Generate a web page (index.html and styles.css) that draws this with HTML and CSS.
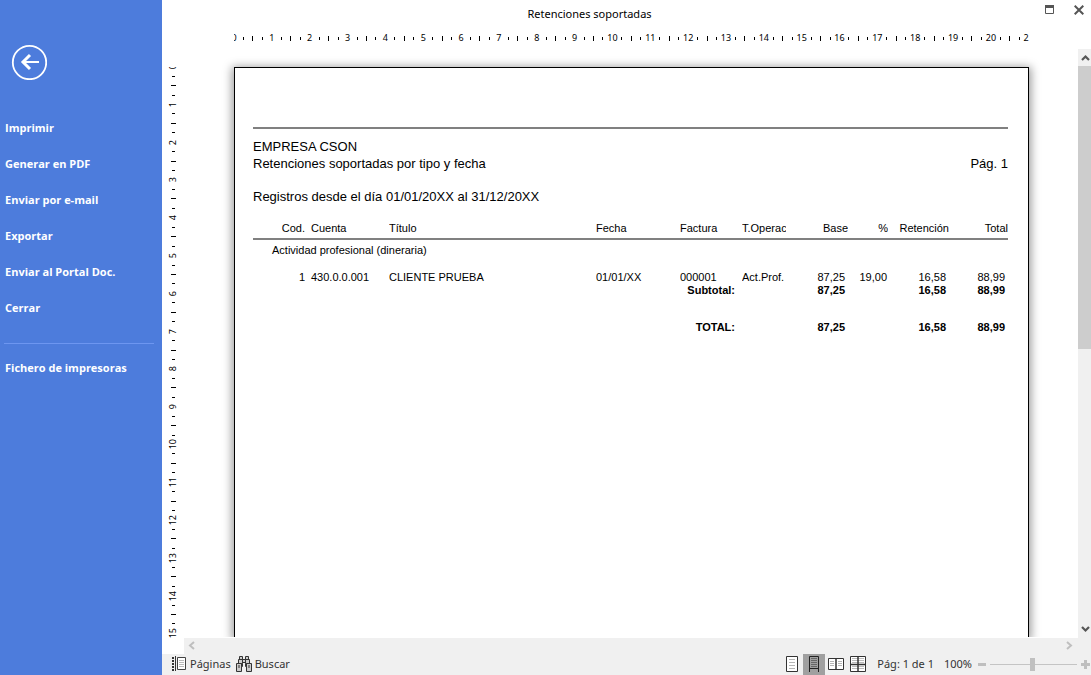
FILE: index.html
```html
<!DOCTYPE html>
<html lang="es">
<head>
<meta charset="utf-8">
<title>Retenciones soportadas</title>
<link rel="stylesheet" href="styles.css">
</head>
<body>
<div class="app">
  <nav class="sidebar" aria-label="Menú">
    <button class="back" type="button" aria-label="Volver">
      <svg width="36" height="36" viewBox="0 0 36 36" fill="none" stroke="#fff">
        <circle cx="18.500" cy="18.500" r="16.700" stroke-width="1.800"/>
        <path d="M28 18H12" stroke-width="2"/>
        <path d="M19 11L12 18L19 25" stroke-width="3"/>
      </svg>
    </button>
    <ul class="menu">
      <li><a href="#">Imprimir</a></li>
      <li><a href="#">Generar en PDF</a></li>
      <li><a href="#">Enviar por e-mail</a></li>
      <li><a href="#">Exportar</a></li>
      <li><a href="#">Enviar al Portal Doc.</a></li>
      <li><a href="#">Cerrar</a></li>
      <li class="menu-split"><a href="#">Fichero de impresoras</a></li>
    </ul>
  </nav>

  <main class="preview">
    <header class="titlebar">
      <h1>Retenciones soportadas</h1>
      <div class="window-buttons">
        <button type="button" aria-label="Maximizar">
          <svg width="9" height="10" viewBox="0 0 9 10"><path d="M.5 1V8.500H8.500V1" fill="none" stroke="#555"/><path d="M0 0H9V3H0z" fill="#555"/></svg>
        </button>
        <button type="button" aria-label="Cerrar ventana">
          <svg width="10" height="10" viewBox="0 0 10 10"><path d="M.7.7L9.300 9.300M9.300.7L.7 9.300" fill="none" stroke="#555" stroke-width="2"/></svg>
        </button>
      </div>
    </header>

    <div class="ruler-row">
      <div class="ruler-h"><ol class="scale" data-units="22"></ol></div>
    </div>

    <div class="workspace">
      <div class="ruler-v"><ol class="scale" data-units="16"></ol></div>
      <div class="viewport">
        <article class="paper">
          <header class="report-head">
            <p>EMPRESA CSON</p>
            <p class="report-title"><span>Retenciones soportadas por tipo y fecha</span><span>Pág. 1</span></p>
            <p class="report-range">Registros desde el día 01/01/20XX al 31/12/20XX</p>
          </header>
          <table class="report">
            <colgroup>
              <col class="c-cod"><col class="c-cuenta"><col><col class="c-fecha"><col class="c-factura">
              <col class="c-oper"><col class="c-base"><col class="c-pct"><col class="c-ret"><col class="c-total">
            </colgroup>
            <thead>
              <tr>
                <th class="num">Cod.</th><th class="inset">Cuenta</th><th>Título</th><th>Fecha</th><th>Factura</th>
                <th>T.Operac.</th><th class="num">Base</th><th class="num">%</th><th class="num">Retención</th><th class="num">Total</th>
              </tr>
            </thead>
            <tbody>
              <tr class="group"><td colspan="10">Actividad profesional (dineraria)</td></tr>
              <tr class="entry">
                <td class="num">1</td><td class="inset">430.0.0.001</td><td>CLIENTE PRUEBA</td><td>01/01/XX</td><td>000001</td>
                <td>Act.Prof.</td><td class="num amount">87,25</td><td class="num rate">19,00</td><td class="num amount">16,58</td><td class="num amount">88,99</td>
              </tr>
              <tr class="sum">
                <td class="num label" colspan="5">Subtotal:</td><td></td><td class="num amount">87,25</td><td></td><td class="num amount">16,58</td><td class="num amount">88,99</td>
              </tr>
            </tbody>
            <tfoot>
              <tr class="sum grand">
                <td class="num label" colspan="5">TOTAL:</td><td></td><td class="num amount">87,25</td><td></td><td class="num amount">16,58</td><td class="num amount">88,99</td>
              </tr>
            </tfoot>
          </table>
        </article>
      </div>
      <div class="vscroll">
        <button type="button" aria-label="Subir"><svg width="9" height="7" viewBox="0 0 9 7"><path d="M1 6L4.500 2.500L8 6" fill="none" stroke="#555" stroke-width="2.200"/></svg></button>
        <div class="track"><div class="thumb"></div></div>
        <button type="button" aria-label="Bajar"><svg width="9" height="7" viewBox="0 0 9 7"><path d="M1 1L4.500 4.500L8 1" fill="none" stroke="#555" stroke-width="2.200"/></svg></button>
      </div>
    </div>

    <div class="hscroll">
      <button type="button" aria-label="Izquierda"><svg width="7" height="9" viewBox="0 0 7 9"><path d="M6 1L2 4.500L6 8" fill="none" stroke="#bfbfbf" stroke-width="2"/></svg></button>
      <button type="button" aria-label="Derecha"><svg width="7" height="9" viewBox="0 0 7 9"><path d="M1 1L5 4.500L1 8" fill="none" stroke="#bfbfbf" stroke-width="2"/></svg></button>
    </div>

    <footer class="status">
      <button class="tool" type="button">
        <svg width="15" height="16" viewBox="0 0 15 16">
          <path d="M1 1v14" stroke="#333" stroke-width="2" stroke-dasharray="2 1"/>
          <path d="M3.500 0v15" stroke="#333"/>
          <path d="M5.500 1.500h8v12h-8z" fill="#fff" stroke="#444"/>
          <path d="M7 4.500h5M7 6.500h5M7 8.500h5M7 10.500h5" stroke="#bbb"/>
        </svg>
        Páginas
      </button>
      <button class="tool" type="button">
        <svg width="16" height="16" viewBox="0 0 16 16" fill="#ccc" stroke="#333">
          <path d="M3.500 .5h3v3h-3zM9.500 .5h3v3h-3z"/>
          <path d="M2.500 3.500h4v4h-4zM9.500 3.500h4v4h-4zM6.500 3.500h3v3h-3z"/>
          <path d="M.5 7.500h5v8h-5zM10.500 7.500h5v8h-5z"/>
          <path d="M5.500 7.500h1v3h-1zM9.500 7.500h1v3h-1z"/>
          <path d="M3 9v3M13 9v3"/>
        </svg>
        Buscar
      </button>
      <div class="modes">
        <button type="button" aria-label="Una página">
          <svg width="12" height="16" viewBox="0 0 12 16"><path d="M.5.5h11v15H.5z" fill="#fff" stroke="#333"/><path d="M3 3.500h6M3 6.500h6M3 9.500h6M3 12.500h6" stroke="#b5b5b5"/></svg>
        </button>
        <button class="active" type="button" aria-label="Ancho de página" aria-pressed="true">
          <svg width="10" height="16" viewBox="0 0 10 16"><path d="M.5 16V.5h9V16M.5 12.500h9" fill="none" stroke="#222"/><path d="M2 2.500h6M2 4.500h6M2 6.500h6M2 8.500h6M2 10.500h6" stroke="#666"/></svg>
        </button>
        <button type="button" aria-label="Dos páginas">
          <svg width="16" height="12" viewBox="0 0 16 12"><path d="M.5.5h15v11H.5z" fill="#fff" stroke="#333"/><path d="M8 0v12" stroke="#333" stroke-width="1.500"/><path d="M2 3.500h4M2 5.500h4M2 7.500h4M10 3.500h4M10 5.500h4M10 7.500h4" stroke="#b5b5b5"/></svg>
        </button>
        <button type="button" aria-label="Cuatro páginas">
          <svg width="16" height="16" viewBox="0 0 16 16"><path d="M.5.5h15v15H.5z" fill="#fff" stroke="#333"/><path d="M2 2.500h12M2 4.500h12M2 6.500h12M2 10.500h12M2 12.500h12" stroke="#bbb"/><path d="M8 0v16M0 8.500h16" stroke="#333" stroke-width="1.500"/></svg>
        </button>
      </div>
      <span class="page-of">Pág: 1 de 1</span>
      <label class="zoom-label" for="zoom">100%</label>
      <div class="zoom">
        <button type="button" aria-label="Alejar"><svg width="8" height="9" viewBox="0 0 8 9"><path d="M0 4.500h8" stroke="#bfbfbf" stroke-width="3"/></svg></button>
        <input id="zoom" type="range" min="0" max="200" value="98">
        <button type="button" aria-label="Acercar"><svg width="9" height="9" viewBox="0 0 9 9"><path d="M0 4.500h9M4.500 0v9" stroke="#bfbfbf" stroke-width="3"/></svg></button>
      </div>
    </footer>
  </main>
</div>
<script src="ruler.js"></script>
</body>
</html>
```

FILE: styles.css
```css
* { box-sizing: border-box; }

body {
  margin: 0;
  background: #fff;
  color: #000;
  font-family: "Noto Sans", "Open Sans", sans-serif;
  font-size: 11px;
}

button {
  display: flex;
  align-items: center;
  justify-content: center;
  margin: 0;
  padding: 0;
  border: 0;
  background: none;
  color: inherit;
  font: inherit;
}

ul, ol, p, h1 { margin: 0; padding: 0; list-style: none; }

.app {
  display: grid;
  grid-template-columns: 162px minmax(0, 1fr);
  height: 100vh;
}

/* Sidebar */
.sidebar { background: #4d7cdc; padding: 44px 8px 0 4px; }
.back { margin-left: 7px; }
.menu { margin-top: 30px; }
.menu a {
  display: block;
  padding-left: 1px;
  color: #fff;
  font-family: "Open Sans", "Noto Sans", sans-serif;
  font-weight: 700;
  line-height: 36px;
  text-decoration: none;
}
.menu-split { margin-top: 17px; padding-top: 6px; border-top: 1px solid #6d96f0; }

/* Preview column */
.preview {
  display: grid;
  grid-template-rows: 26px 23px minmax(0, 1fr) 16px 21px;
  min-width: 0;
  height: 100vh;
}
.titlebar { display: flex; align-items: center; }
.titlebar h1 { flex: 1; text-align: center; font-size: 11px; font-weight: 400; }
.window-buttons {
  display: flex;
  justify-content: flex-end;
  gap: 20px;
  width: 74px;
  padding: 0 7px 7px 0;
}

/* Rulers, one unit per centimetre */
.ruler-row { padding: 0 62px 0 72px; }
.ruler-h { height: 23px; overflow: hidden; }
.scale { display: flex; font-size: 9px; line-height: 10px; }
.unit { display: grid; flex: none; }
.unit > * { display: flex; align-items: center; justify-content: center; min-width: 0; min-height: 0; }
.unit b { font-weight: 400; }
.unit i::before { content: ""; width: 1px; height: 3px; background: #000; }
.unit .major::before { height: 5px; }
.ruler-h .scale { width: 100%; height: 24px; margin-left: calc(-100% / 168); }
.ruler-h .unit { width: calc(100% / 21); grid-template-columns: repeat(4, 1fr); }

.ruler-v { margin-top: 18px; overflow: hidden; }
.ruler-v .scale { flex-direction: column; margin-top: -5px; }
.ruler-v .unit { height: 1cm; grid-template-rows: repeat(4, 1fr); }
.ruler-v .unit span b { writing-mode: vertical-rl; transform: rotate(180deg); }
.ruler-v .unit i::before { width: 3px; height: 1px; }
.ruler-v .unit .major::before { width: 5px; height: 1px; }

/* Page area */
.workspace {
  display: grid;
  grid-template-columns: 22px minmax(0, 1fr) 13px;
  min-height: 0;
}
.viewport { display: flex; overflow: hidden; margin-bottom: 1px; padding: 18px 49px 0 50px; }
.paper {
  flex: 1;
  min-width: 0;
  padding: 59px 20px 0 18px;
  border: 1px solid #000;
  border-bottom: 0;
  box-shadow: 0 2px 9px 2px rgba(0, 0, 0, .4);
  font-family: "Liberation Sans", Arial, sans-serif;
}
.report-head {
  padding-top: 9px;
  border-top: 2px solid #808080;
  font-size: 13px;
  line-height: 17px;
}
.report-title { display: flex; justify-content: space-between; }
.report-range { margin-top: 16px; }

.report {
  width: 100%;
  margin-top: 14px;
  border-collapse: separate;
  border-spacing: 0;
  table-layout: fixed;
  font-size: 11px;
  line-height: 13px;
}
.c-cod { width: 52px; }
.c-cuenta, .c-fecha { width: 84px; }
.c-factura, .c-base { width: 62px; }
.c-oper { width: 44px; }
.c-pct { width: 40px; }
.c-ret { width: 61px; }
.c-total { width: 59px; }
.report th, .report td {
  padding: 0;
  overflow: hidden;
  text-align: left;
  font-weight: 400;
  white-space: nowrap;
}
.report th { padding: 3px 0; border-bottom: 2px solid #808080; }
.report .inset { padding-left: 6px; }
.report .num { text-align: right; }
.report .amount { padding-right: 3px; }
.report .rate { padding-right: 1px; }
.report .group td { padding: 4px 0 4px 19px; }
.report .entry td { padding-top: 10px; }
.report .sum td { font-weight: 700; }
.report .label { padding-right: 7px; }
.report .grand td { padding-top: 24px; }

/* Scroll bars */
.vscroll { display: flex; flex-direction: column; background: #f0f0f0; }
.vscroll button { height: 17px; padding-left: 2px; }
.vscroll .track { flex: 1; }
.vscroll .thumb { height: 51%; background: #cdcdcd; }
.hscroll {
  display: flex;
  justify-content: space-between;
  margin-left: 22px;
  padding: 0 18px 2px 4px;
  background: #f0f0f0;
}

/* Status bar */
.status {
  display: flex;
  align-items: stretch;
  padding: 0 1px 0 10px;
  background: #f0f0f0;
  color: #333;
}
.tool { gap: 3px; margin-right: 5px; padding-bottom: 2px; }
.modes { display: flex; margin-left: auto; }
.modes button { width: 22px; padding-bottom: 1px; }
.modes .active { background: #a0a0a0; }
.page-of, .zoom-label { line-height: 19px; white-space: nowrap; }
.page-of { margin-left: 8px; }
.zoom-label { margin-left: 10px; }
.zoom { display: flex; gap: 4px; margin-left: 6px; }
.zoom input { width: 87px; margin: 0; background: none; appearance: none; }
.zoom input::-webkit-slider-runnable-track {
  height: 13px;
  background: linear-gradient(#c4c4c4, #c4c4c4) center / 100% 1px no-repeat;
}
.zoom input::-webkit-slider-thumb { width: 5px; height: 13px; background: #c0c0c0; appearance: none; }
```

FILE: ruler.js
```js
// Fill each ruler with numbered centimetres and quarter marks.
document.querySelectorAll(".scale").forEach(function (scale) {
  for (let n = 0; n < Number(scale.dataset.units); n++) {
    const unit = document.createElement("li");
    unit.className = "unit";
    unit.innerHTML = "<span><b>" + n + "</b></span><i></i><i class=\"major\"></i><i></i>";
    scale.appendChild(unit);
  }
});
```
